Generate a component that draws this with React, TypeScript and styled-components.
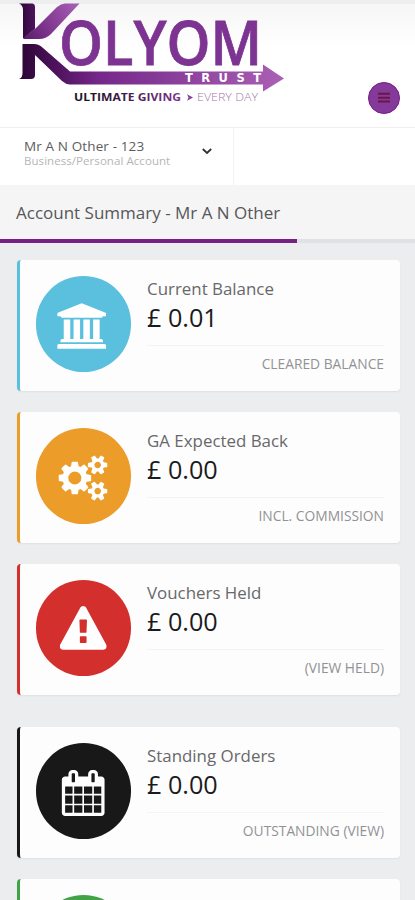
import React from "react";
import styled, { createGlobalStyle } from "styled-components";

const GlobalStyle = createGlobalStyle`
  *, *::before, *::after { box-sizing: border-box; }
  body {
    margin: 0;
    height: 900px;
    overflow: hidden;
    background: #ebedef;
    font-family: "Open Sans", "Noto Sans", sans-serif;
  }
`;

const Page = styled.div`
  width: 415px;
  height: 900px;
  overflow: hidden;
  background: #ebedef;
`;

const Header = styled.header`
  display: flex;
  justify-content: space-between;
  height: 128px;
  padding-right: 15px;
  border-top: 4px solid #eeeeee;
  border-bottom: 1px solid #f0f0f0;
  background: linear-gradient(#f6f6f6, #ffffff 44px);
`;

const Logo = styled.svg`
  display: block;
  flex: none;
  margin-top: -4px;
`;

const MenuButton = styled.button`
  display: flex;
  align-items: center;
  justify-content: center;
  width: 32px;
  height: 32px;
  margin-top: 78px;
  padding: 0;
  border: 1px solid #79198c;
  border-radius: 50%;
  background: #853a99;
`;

const AccountBar = styled.div`
  display: flex;
  height: 57px;
  background: #fff;
`;

const AccountPicker = styled.div`
  display: flex;
  justify-content: space-between;
  width: 234px;
  padding: 9px 21px 0 24px;
  border-right: 1px solid #f3f3f3;
`;

const AccountName = styled.div`
  font-size: 13.5px;
  line-height: 18px;
  letter-spacing: 0.12px;
  color: #5c5c5c;
  white-space: nowrap;
`;

const AccountType = styled.div`
  font-size: 11.5px;
  line-height: 12px;
  letter-spacing: 0.06px;
  color: #b5b5b5;
  white-space: nowrap;
`;

const Chevron = styled.svg`
  margin-top: 11px;
`;

const TitleBar = styled.div`
  height: 58px;
  padding: 15px 16px 0;
  border-bottom: 4px solid #e0e1e4;
  background: #f5f5f5;
`;

const Title = styled.h1`
  margin: 0;
  font-size: 17px;
  line-height: 25px;
  font-weight: 400;
  color: #56575b;
  white-space: nowrap;
`;

const TitleUnderline = styled.div`
  width: 297px;
  height: 4px;
  margin: 14px 0 0 -16px;
  background: #762283;
`;

const Cards = styled.main`
  display: flex;
  flex-direction: column;
  padding: 17px 15px 0 16.5px;
`;

const Card = styled.section<{ $color: string; $gap: number }>`
  display: flex;
  flex: none;
  gap: 16px;
  height: 130.5px;
  margin-bottom: ${(p) => p.$gap}px;
  padding: 16px 16px 0 16px;
  border-left: 3px solid ${(p) => p.$color};
  border-radius: 4px;
  background: #fdfdfd;
  box-shadow: 0 1px 2px rgba(60, 70, 80, 0.07);
`;

const IconDisc = styled.div<{ $color: string }>`
  display: flex;
  flex: none;
  align-items: center;
  justify-content: center;
  width: 95.5px;
  height: 95.5px;
  border-radius: 50%;
  background: ${(p) => p.$color};
`;

const DiscIcon = styled.svg<{ $shift: number }>`
  transform: translate(${(p) => p.$shift}px, 2px);
`;

const CardBody = styled.div`
  display: flex;
  flex: 1;
  flex-direction: column;
`;

const Label = styled.div`
  font-size: 16.9px;
  line-height: 25px;
  color: #68686b;
`;

const Amount = styled.div`
  font-size: 25.2px;
  line-height: 32px;
  color: #1b1b1d;
`;

const Note = styled.div`
  margin-top: 12px;
  padding-top: 9px;
  border-top: 1px solid #f4f4f4;
  font-size: 13.8px;
  line-height: 18px;
  text-align: right;
  color: #929294;
  white-space: nowrap;
`;

const BANK =
  "M960 0l960 384v128h-128q0 26-20.5 45t-48.5 19h-1526q-28 0-48.5-19t-20.5-45h-128v-128zm-704 640h256v768h128v-768h256v768h128v-768h256v768h128v-768h256v768h59q28 0 48.5 19t20.5 45v64h-1664v-64q0-26 20.5-45t48.5-19h59v-768zm1595 960q28 0 48.5 19t20.5 45v128h-1920v-128q0-26 20.5-45t48.5-19h1782z";
const COGS =
  "M896 896q0-106-75-181t-181-75-181 75-75 181 75 181 181 75 181-75 75-181zm768 512q0-52-38-90t-90-38-90 38-38 90q0 53 37.5 90.5t90.5 37.5 90.5-37.5 37.5-90.5zm0-1024q0-52-38-90t-90-38-90 38-38 90q0 53 37.5 90.5t90.5 37.5 90.5-37.5 37.5-90.5zm-384 421v185q0 10-7 19.5t-16 10.5l-155 24q-11 35-32 76 34 48 90 115 7 11 7 20 0 12-7 19-23 30-82.5 89.5t-78.5 59.5q-11 0-21-7l-115-90q-37 19-77 31-11 108-23 155-7 24-30 24h-186q-11 0-20-7.5t-10-17.5l-23-153q-34-10-75-31l-118 89q-7 7-20 7-11 0-21-8-144-133-144-160 0-9 7-19 10-14 41-53t47-61q-23-44-35-82l-152-24q-10-1-17-9.5t-7-19.5v-185q0-10 7-19.5t16-10.5l155-24q11-35 32-76-34-48-90-115-7-11-7-20 0-12 7-20 22-30 82-89t79-59q11 0 21 7l115 90q34-18 77-32 11-108 23-154 7-24 30-24h186q11 0 20 7.5t10 17.5l23 153q34 10 75 31l118-89q8-7 20-7 11 0 21 8 144 133 144 160 0 8-7 19-12 16-42 54t-45 60q23 48 34 82l152 23q10 2 17 10.5t7 19.5zm640 533v140q0 16-149 31-12 27-30 52 51 113 51 138 0 4-4 7-122 71-124 71-8 0-46-47t-52-68q-20 2-30 2t-30-2q-14 21-52 68t-46 47q-2 0-124-71-4-3-4-7 0-25 51-138-18-25-30-52-149-15-149-31v-140q0-16 149-31 13-29 30-52-51-113-51-138 0-4 4-7 4-2 35-20t59-34 30-16q8 0 46 46.5t52 67.5q20-2 30-2t30 2q51-71 92-112l6-2q4 0 124 70 4 3 4 7 0 25-51 138 17 23 30 52 149 15 149 31zm0-1024v140q0 16-149 31-12 27-30 52 51 113 51 138 0 4-4 7-122 71-124 71-8 0-46-47t-52-68q-20 2-30 2t-30-2q-14 21-52 68t-46 47q-2 0-124-71-4-3-4-7 0-25 51-138-18-25-30-52-149-15-149-31v-140q0-16 149-31 13-29 30-52-51-113-51-138 0-4 4-7 4-2 35-20t59-34 30-16q8 0 46 46.5t52 67.5q20-2 30-2t30 2q51-71 92-112l6-2q4 0 124 70 4 3 4 7 0 25-51 138 17 23 30 52 149 15 149 31z";
const WARNING =
  "M1024 1375v-190q0-14-9.5-23.5t-22.5-9.5h-192q-13 0-22.5 9.5t-9.5 23.5v190q0 14 9.5 23.5t22.5 9.5h192q13 0 22.5-9.5t9.5-23.5zm-2-374l18-459q0-12-10-19-13-11-24-11h-220q-11 0-24 11-10 7-10 21l17 457q0 10 10 16.5t24 6.5h185q14 0 23.5-6.5t10.5-16.5zm-14-934l768 1408q35 63-2 126-17 29-46.5 46t-63.5 17h-1536q-34 0-63.5-17t-46.5-46q-37-63-2-126l768-1408q17-31 47-49t65-18 65 18 47 49z";
const CALENDAR =
  "M192 1664h288v-288h-288v288zm352 0h320v-288h-320v288zm-352-352h288v-320h-288v320zm352 0h320v-320h-320v320zm-352-384h288v-288h-288v288zm736 736h320v-288h-320v288zm-384-736h320v-288h-320v288zm768 736h288v-288h-288v288zm-384-352h320v-320h-320v320zm-352-864v-288q0-13-9.5-22.5t-22.5-9.5h-64q-13 0-22.5 9.5t-9.5 22.5v288q0 13 9.5 22.5t22.5 9.5h64q13 0 22.5-9.5t9.5-22.5zm736 864h288v-320h-288v320zm-384-384h320v-288h-320v288zm384 0h288v-288h-288v288zm32-480v-288q0-13-9.5-22.5t-22.5-9.5h-64q-13 0-22.5 9.5t-9.5 22.5v288q0 13 9.5 22.5t22.5 9.5h64q13 0 22.5-9.5t9.5-22.5zm384-64v1280q0 52-38 90t-90 38h-1408q-52 0-90-38t-38-90v-1280q0-52 38-90t90-38h128v-96q0-66 47-113t113-47h64q66 0 113 47t47 113v96h384v-96q0-66 47-113t113-47h64q66 0 113 47t47 113v96h128q52 0 90 38t38 90z";

type Item = {
  label: string;
  amount: string;
  note: string;
  color: string;
  gap: number;
  icon?: { path: string; units: number; width: number; height: number; shift: number };
};

const items: Item[] = [
  { label: "Current Balance", amount: "£ 0.01", note: "CLEARED BALANCE", color: "#5bbfde", gap: 21.5, icon: { path: BANK, units: 1920, width: 49, height: 46, shift: -1.8 } },
  { label: "GA Expected Back", amount: "£ 0.00", note: "INCL. COMMISSION", color: "#ec9d29", gap: 21.5, icon: { path: COGS, units: 1920, width: 49, height: 46, shift: -0.5 } },
  { label: "Vouchers Held", amount: "£ 0.00", note: "(VIEW HELD)", color: "#d32f2c", gap: 32.5, icon: { path: WARNING, units: 1792, width: 47, height: 47, shift: -0.3 } },
  { label: "Standing Orders", amount: "£ 0.00", note: "OUTSTANDING (VIEW)", color: "#181818", gap: 21.5, icon: { path: CALENDAR, units: 1792, width: 46, height: 46, shift: 0.2 } },
  { label: "", amount: "", note: "", color: "#41a346", gap: 0 },
];

function BrandLogo() {
  return (
    <Logo width="300" height="112" viewBox="0 0 300 112" role="img" aria-label="Kolyom Trust">
      <defs>
        <linearGradient id="upper" x1="24" y1="38" x2="74" y2="4" gradientUnits="userSpaceOnUse">
          <stop offset="0" stopColor="#5a1d6c" />
          <stop offset="0.35" stopColor="#7a3189" />
          <stop offset="1" stopColor="#a45bb2" />
        </linearGradient>
        <linearGradient id="stem" x1="20" y1="0" x2="36" y2="0" gradientUnits="userSpaceOnUse">
          <stop offset="0" stopColor="#2c0635" />
          <stop offset="1" stopColor="#511461" />
        </linearGradient>
        <linearGradient id="lower" x1="20" y1="0" x2="284" y2="0" gradientUnits="userSpaceOnUse">
          <stop offset="0" stopColor="#2c0635" />
          <stop offset="0.12" stopColor="#4a1058" />
          <stop offset="0.3" stopColor="#75288a" />
          <stop offset="1" stopColor="#aa60b4" />
        </linearGradient>
        <linearGradient id="tag" x1="74" y1="0" x2="180" y2="0" gradientUnits="userSpaceOnUse">
          <stop offset="0" stopColor="#191320" />
          <stop offset="0.4" stopColor="#391644" />
          <stop offset="1" stopColor="#7d348e" />
        </linearGradient>
      </defs>
      <path d="M23 38 L35 29 L57 7 Q61 3.5 65 3.5 H79.5 L51 34 Q46 39 39 39 H24 Z" fill="url(#upper)" />
      <path d="M19 3.5 H32 Q35 3.5 35 7 V29 L23 38.5 V10 Q23 5 19 3.5 Z" fill="url(#stem)" />
      <path d="M22.5 44 H34 Q39 44 43 48 L70 71.5 H263 V64.5 L284 78.5 L263 91.5 V84.5 H70 Q66 84.5 62 81 L35 55 V75 Q35 79 31 79 H19 Q22.5 78 22.5 73 Z" fill="url(#lower)" />
      <text x="59" y="64.8" textLength="203" lengthAdjust="spacingAndGlyphs" fontFamily="Open Sans" fontSize="61.5" fontWeight="600" fill="#7d3391" stroke="#7d3391" strokeWidth="0.8">OLYOM</text>
      <text x="185" y="82.4" textLength="76" fontFamily="DejaVu Sans" fontSize="11.5" fontWeight="700" fill="#fff">TRUST</text>
      <text x="74" y="101" textLength="107" lengthAdjust="spacingAndGlyphs" fontFamily="Open Sans" fontSize="10.8" fontWeight="700" fill="url(#tag)">ULTIMATE GIVING</text>
      <path d="M187 94.2 L193 97.5 L187 100.8 L188.5 97.5 Z" fill="#85429a" />
      <text x="197" y="101" textLength="61" lengthAdjust="spacingAndGlyphs" fontFamily="Open Sans" fontSize="10.8" fontWeight="300" fill="#a17aac">EVERY DAY</text>
    </Logo>
  );
}

export default function App() {
  return (
    <Page>
      <GlobalStyle />
      <Header>
        <BrandLogo />
        <MenuButton aria-label="Menu">
          <svg width="12" height="12" viewBox="0 0 12 12">
            <path d="M0 1.7h12M0 5.7h12M0 9.5h12" stroke="#6b1648" strokeWidth="2" />
          </svg>
        </MenuButton>
      </Header>
      <AccountBar>
        <AccountPicker>
          <div>
            <AccountName>Mr A N Other - 123</AccountName>
            <AccountType>Business/Personal Account</AccountType>
          </div>
          <Chevron width="10" height="7" viewBox="0 0 10 7">
            <path d="M0.8 1l4.2 4L9.2 1" fill="none" stroke="#303030" strokeWidth="1.8" />
          </Chevron>
        </AccountPicker>
      </AccountBar>
      <TitleBar>
        <Title>Account Summary - Mr A N Other</Title>
        <TitleUnderline />
      </TitleBar>
      <Cards>
        {items.map((item) => (
          <Card key={item.color} $color={item.color} $gap={item.gap}>
            <IconDisc $color={item.color}>
              {item.icon && (
                <DiscIcon $shift={item.icon.shift} width={item.icon.width} height={item.icon.height} viewBox={`0 0 ${item.icon.units} 1792`}>
                  <path d={item.icon.path} fill="#fff" />
                </DiscIcon>
              )}
            </IconDisc>
            {item.label && (
              <CardBody>
                <Label>{item.label}</Label>
                <Amount>{item.amount}</Amount>
                <Note>{item.note}</Note>
              </CardBody>
            )}
          </Card>
        ))}
      </Cards>
    </Page>
  );
}
